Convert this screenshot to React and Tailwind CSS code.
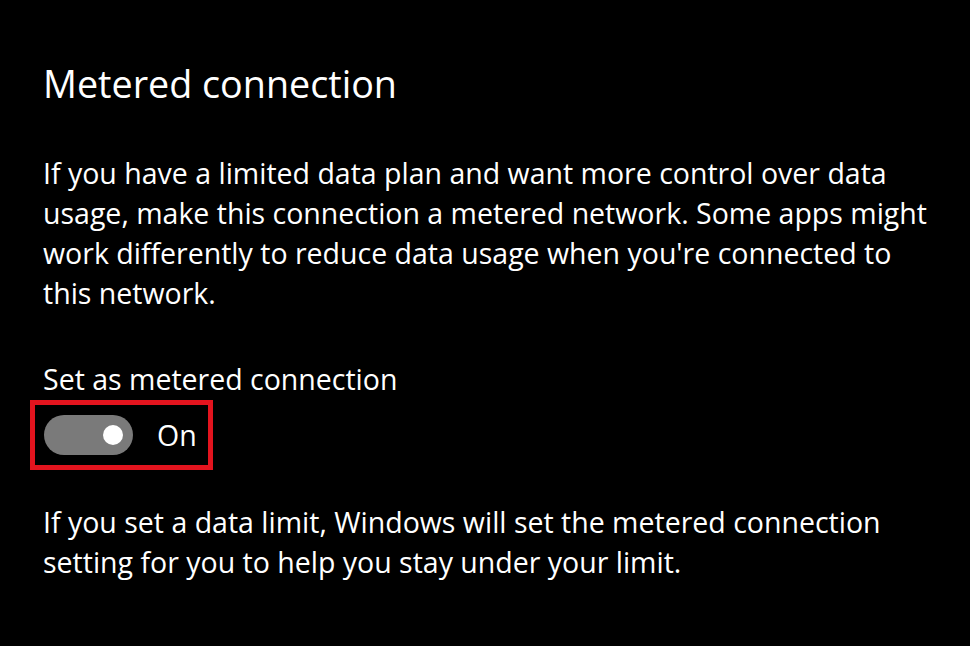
export default function App() {
  return (
    <div className="w-[970px] h-[646px] bg-black text-white overflow-hidden pl-[43px] pt-[60px]" style={{ fontFamily: '"Open Sans", "Noto Sans", sans-serif' }}>
      <h1 className="text-[37.7px] leading-[48px] font-normal whitespace-nowrap">Metered connection</h1>
      <p className="mt-[45px] text-[28.5px] leading-[40px] whitespace-nowrap">
        If you have a limited data plan and want more control over data<br />
        usage, make this connection a metered network. Some apps might<br />
        work differently to reduce data usage when you're connected to<br />
        this network.
      </p>
      <p className="mt-[46px] text-[28.5px] leading-[40px] whitespace-nowrap">Set as metered connection</p>
      <div className="mt-[1px] -ml-[13px] w-[183px] h-[70px] border-[5px] border-[#e3141e] flex items-center pl-[9px] gap-[24px]">
        <div className="w-[89px] h-[40px] rounded-full bg-[#7a7a7a] flex items-center justify-end pr-[10px]">
          <div className="w-[20px] h-[20px] rounded-full bg-white" />
        </div>
        <span className="text-[28.5px] leading-[40px]">On</span>
      </div>
      <p className="mt-[32px] text-[28.5px] leading-[40px] whitespace-nowrap">
        If you set a data limit, Windows will set the metered connection<br />
        setting for you to help you stay under your limit.
      </p>
    </div>
  );
}
